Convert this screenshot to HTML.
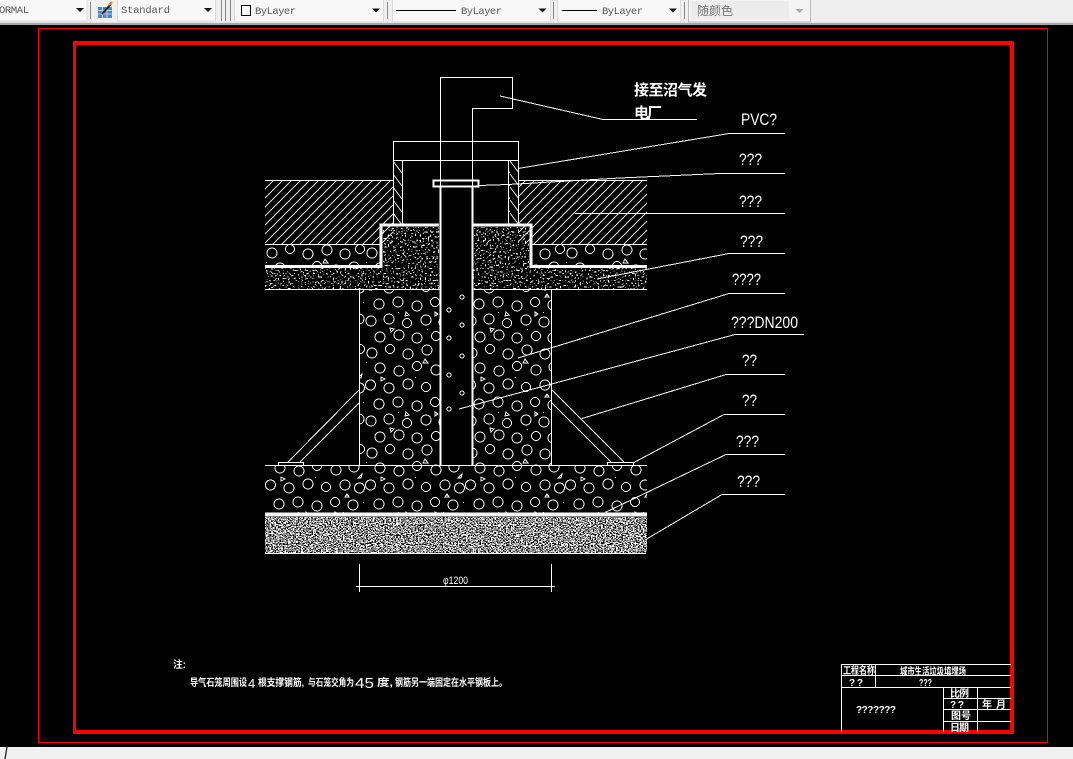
<!DOCTYPE html>
<html><head><meta charset="utf-8"><style>
html,body{margin:0;padding:0;background:#000;width:1073px;height:759px;overflow:hidden}
svg{display:block}
.t{font-family:"Liberation Mono",monospace;font-size:10.500px;fill:#555}
.l{font-family:"Liberation Sans",sans-serif;font-size:17px;fill:#fff}
.c{font-family:"Liberation Sans","WenQuanYi Zen Hei","Noto Sans CJK SC",sans-serif;fill:#fff;font-weight:bold}
.n{font-family:"Liberation Sans","WenQuanYi Zen Hei","Noto Sans CJK SC",sans-serif;fill:#fff;font-size:10px;font-weight:bold}
.combo{fill:#f8f8f8;stroke:#dcdcdc}
.sep{stroke:#888;stroke-width:1}
</style></head><body>
<svg width="1073" height="759" viewBox="0 0 1073 759" xmlns="http://www.w3.org/2000/svg">
<defs>
<pattern id="c" width="100" height="100" patternUnits="userSpaceOnUse" patternTransform="translate(265 244)">
<g fill="none" stroke="#fff" stroke-width="1" shape-rendering="crispEdges">
<circle cx="7" cy="9" r="5"/><circle cx="25" cy="5" r="4.500"/><circle cx="43" cy="10" r="5"/><circle cx="62" cy="6" r="5"/><circle cx="80" cy="10" r="5"/><circle cx="95" cy="5" r="4.500"/>
<circle cx="15" cy="24" r="5"/><circle cx="34" cy="27" r="5"/><circle cx="52" cy="22" r="4.500"/><circle cx="71" cy="26" r="5"/><circle cx="89" cy="23" r="5"/>
<circle cx="5.500" cy="41" r="5"/><circle cx="24" cy="44" r="5"/><circle cx="43" cy="40" r="5"/><circle cx="61" cy="43" r="4.500"/><circle cx="80" cy="41" r="5"/><circle cx="94.500" cy="44" r="5"/>
<circle cx="14" cy="60" r="5"/><circle cx="33" cy="58" r="5"/><circle cx="52" cy="62" r="5"/><circle cx="70" cy="58" r="4.500"/><circle cx="88" cy="61" r="5"/>
<circle cx="6" cy="77" r="5"/><circle cx="24" cy="75" r="5"/><circle cx="42" cy="79" r="4.500"/><circle cx="61" cy="76" r="5"/><circle cx="79" cy="78" r="5"/><circle cx="94" cy="75" r="5"/>
<circle cx="15" cy="93" r="5"/><circle cx="34" cy="91" r="5"/><circle cx="52" cy="94" r="5"/><circle cx="71" cy="92" r="4.500"/><circle cx="88" cy="94" r="5"/>
<path d="M16 33l4 2-4 2zM60 15l3 4h-5zM97 30l-1 4h-3zM41 68l3 3-4 1zM70 68l3 2-3 2zM25 84l4 1-3 3zM82 50l2 3h-4z"/>
</g>
<g fill="#fff"><rect x="1" y="18" width="1" height="1"/><rect x="50" y="33" width="1" height="1"/><rect x="33" y="68" width="1" height="1"/><rect x="78" y="68" width="1" height="1"/><rect x="98" y="58" width="1" height="1"/><rect x="62" y="85" width="1" height="1"/></g>
</pattern>
<pattern id="h1" width="9" height="9" patternUnits="userSpaceOnUse" patternTransform="translate(265 180)">
<path d="M-1 10L10 -1M-1 1L1 -1M8 10L10 8" stroke="#fff" stroke-width=".9" fill="none"/>
</pattern>
<pattern id="h2" width="9" height="13" patternUnits="userSpaceOnUse" patternTransform="translate(393 161)">
<path d="M0 0L9 12" stroke="#fff" stroke-width=".9" fill="none"/>
</pattern>
<filter id="g1" x="0" y="0" width="100%" height="100%" color-interpolation-filters="sRGB">
<feTurbulence type="fractalNoise" baseFrequency="0.6" numOctaves="1" seed="5"/>
<feColorMatrix values="0 0 0 0 1 0 0 0 0 1 0 0 0 0 1 80 0 0 0 -50"/>
</filter>
<filter id="g2" x="0" y="0" width="100%" height="100%" color-interpolation-filters="sRGB">
<feTurbulence type="fractalNoise" baseFrequency="0.6 1.1" numOctaves="1" seed="9"/>
<feColorMatrix values="0 0 0 0 1 0 0 0 0 1 0 0 0 0 1 80 0 0 0 -38.500"/>
</filter>
</defs>

<!-- backgrounds -->
<rect width="1073" height="759" fill="#000"/>
<rect width="1073" height="22" fill="#efefef"/>
<rect y="22" width="1073" height="1" fill="#e0e0e0"/>
<rect y="23" width="1073" height="2" fill="#a8a8a8"/>
<rect y="747" width="1073" height="12" fill="#f0f0f0"/>
<path d="M7 747L5 759" stroke="#222" stroke-width="1.300"/>

<!-- toolbar -->
<g shape-rendering="crispEdges">
<rect x="-3" y="-2" width="90" height="23" class="combo"/>
<rect x="117.500" y="-2" width="98" height="23" class="combo"/>
<rect x="234.500" y="-2" width="149" height="24" class="combo"/>
<rect x="392.500" y="-2" width="158" height="24" class="combo"/>
<rect x="557.500" y="-2" width="123" height="24" class="combo"/>
<rect x="688.500" y="-2" width="122" height="24" fill="#f4f4f4" stroke="#bbb"/>
<rect x="691" y="1" width="98" height="18" fill="#ececec"/>
<path class="sep" d="M90.500 2V19M221.500 0V21M225.500 0V21M230.500 0V21M387.500 2V19M553.500 2V19M684.500 2V19"/>
<rect x="241.500" y="5.500" width="9" height="10" fill="#fff" stroke="#000"/>
<path d="M396 10.500H456M562 10.500H597" stroke="#000"/>
</g>
<g fill="#111">
<path d="M76 8h8l-4 4zM204 8h8l-4 4zM372 8.500h8l-4 4zM538.500 8.500h8l-4 4zM669 8.500h8l-4 4z"/>
<path d="M795.500 9h8l-4 4z" fill="#aaa"/>
</g>
<text class="t" x="-1" y="13" textLength="30">ORMAL</text>
<text class="t" x="121" y="13" textLength="49">Standard</text>
<text class="t" x="255" y="14" textLength="41">ByLayer</text>
<text class="t" x="461" y="14" textLength="41">ByLayer</text>
<text class="t" x="602" y="14" textLength="41">ByLayer</text>
<text x="697" y="15" font-size="12" fill="#777" font-family="'WenQuanYi Zen Hei','Noto Sans CJK SC',sans-serif">随颜色</text>
<!-- icon -->
<rect x="98" y="7" width="14" height="11" fill="#4f86c6"/>
<path d="M98 10.500H112M98 14H112M102.500 7V18M107 7V18" stroke="#cfe0f2" stroke-width=".8"/>
<path d="M102 14L111 4" stroke="#222" stroke-width="2"/>
<path d="M109 5L112 2" stroke="#d88a2a" stroke-width="2"/>

<!-- red frames -->
<path fill="#f00" fill-rule="evenodd" d="M38 28H1048V743H38ZM39 29V742H1047V29Z"/>
<path fill="#f00" fill-rule="evenodd" d="M73 41H1014V734H73ZM76 45V730H1010V45Z"/>

<!-- textures -->
<rect x="265" y="180" width="128" height="64" fill="url(#h1)"/>
<rect x="518" y="180" width="129" height="64" fill="url(#h1)"/>
<rect x="393" y="161" width="9" height="63" fill="url(#h2)"/>
<rect x="509" y="161" width="9" height="63" fill="url(#h2)"/>
<rect x="265" y="244" width="115" height="22" fill="url(#c)"/>
<rect x="532" y="244" width="115" height="22" fill="url(#c)"/>
<rect x="360" y="289" width="80" height="176" fill="url(#c)"/>
<rect x="473" y="289" width="79" height="176" fill="url(#c)"/>
<rect x="265" y="465" width="382" height="48" fill="url(#c)"/>
<rect x="265" y="268" width="175" height="21" fill="#fff" filter="url(#g1)"/>
<rect x="473" y="268" width="174" height="21" fill="#fff" filter="url(#g1)"/>
<rect x="383" y="227" width="56" height="41" fill="#fff" filter="url(#g1)"/>
<rect x="474" y="227" width="55" height="41" fill="#fff" filter="url(#g1)"/>
<rect x="265" y="517" width="382" height="36" fill="#fff" filter="url(#g2)"/>

<!-- structure -->
<g fill="none" stroke="#fff" stroke-width="1" shape-rendering="crispEdges">
<path d="M440.500 187V77.500H512.500V108.500H472.500V187"/>
<path d="M393.500 224V141.500H518.500V224M393.500 160.500H518.500M402.500 160.500V224M508.500 160.500V224"/>
<path d="M265 180.500H393M518 180.500H647M265 244.500H380M531 244.500H647M265 289.500H440M473 289.500H647M265 465.500H647M265 553.500H646"/>
<path d="M359.500 289V465M551.500 289V465"/>
<rect x="433.500" y="180.500" width="45" height="6" stroke-width="2"/>
<path d="M265 514.500H647" stroke-width="4"/>
<path d="M265 266.500H381V225H439M473 225H531V266.500H647" stroke-width="3"/>
<path d="M440.500 187V465M472.500 187V465" stroke-width="2"/>
<path d="M359.500 564V592M551.500 564V592M356 586.500H555"/>
<rect x="278.500" y="462.500" width="25" height="3"/>
<rect x="607.500" y="462.500" width="26" height="3"/>
</g>
<g fill="none" stroke="#fff" stroke-width="1" shape-rendering="crispEdges">
<path d="M359 390L288 462M359 403L300 462M552 390L624 462M552 403L611 462"/>
<path d="M500 96L603 119.500H697"/>
<path d="M518 168.500L729 133.500H785"/>
<path d="M479 185.500L508 184.500L620 178L720 173.500H785"/>
<path d="M575 213.500H785"/>
<path d="M597 279L729 253.500H785"/>
<path d="M518 358L729 293.500H785"/>
<path d="M459 409L735 334.500H804"/>
<path d="M582 418.500L726 374.500H785"/>
<path d="M633 463L724 414.500H785"/>
<path d="M606 512L726 454.500H785"/>
<path d="M645 540L722 494.500H785"/>
<circle cx="449" cy="310" r="2"/><circle cx="462" cy="297" r="2"/><circle cx="462" cy="325" r="2"/><circle cx="449" cy="338" r="2"/><circle cx="462" cy="356" r="2"/><circle cx="449" cy="375" r="2"/><circle cx="462" cy="393" r="2"/><circle cx="449" cy="409" r="2"/>
</g>

<!-- labels -->
<text class="c" x="634" y="95" font-size="15" textLength="73">接至沼气发</text>
<text class="c" x="634" y="118" font-size="15" textLength="28">电厂</text>
<text class="l" x="741" y="125" textLength="36" lengthAdjust="spacingAndGlyphs">PVC?</text>
<text class="l" x="739" y="165" textLength="23" lengthAdjust="spacingAndGlyphs">???</text>
<text class="l" x="739" y="207" textLength="23" lengthAdjust="spacingAndGlyphs">???</text>
<text class="l" x="740" y="247" textLength="23" lengthAdjust="spacingAndGlyphs">???</text>
<text class="l" x="732" y="285" textLength="29" lengthAdjust="spacingAndGlyphs">????</text>
<text class="l" x="731" y="328" textLength="67" lengthAdjust="spacingAndGlyphs">???DN200</text>
<text class="l" x="742" y="366" textLength="15" lengthAdjust="spacingAndGlyphs">??</text>
<text class="l" x="742" y="406" textLength="15" lengthAdjust="spacingAndGlyphs">??</text>
<text class="l" x="736" y="447" textLength="23" lengthAdjust="spacingAndGlyphs">???</text>
<text class="l" x="737" y="487" textLength="23" lengthAdjust="spacingAndGlyphs">???</text>
<text x="443" y="584" font-family="Liberation Sans,sans-serif" font-size="11" fill="#fff" textLength="25" lengthAdjust="spacingAndGlyphs">φ1200</text>

<!-- notes -->
<text class="n" x="173" y="668" textLength="13" lengthAdjust="spacingAndGlyphs">注:</text>
<text class="n" x="190" y="686" textLength="57" lengthAdjust="spacingAndGlyphs">导气石笼周围设</text>
<text x="248" y="688" font-family="Liberation Sans,sans-serif" font-size="13" fill="#fff">4</text>
<text class="n" x="258" y="686" textLength="46" lengthAdjust="spacingAndGlyphs">根支撑钢筋,</text>
<text class="n" x="308" y="686" textLength="46" lengthAdjust="spacingAndGlyphs">与石笼交角为</text>
<text x="355" y="688" font-family="Liberation Sans,sans-serif" font-size="15" fill="#fff" textLength="19" lengthAdjust="spacingAndGlyphs">45</text>
<text class="n" x="377" y="686" textLength="16" lengthAdjust="spacingAndGlyphs">度,</text>
<text class="n" x="395" y="686" textLength="112" lengthAdjust="spacingAndGlyphs">钢筋另一端固定在水平钢板上。</text>

<!-- title block -->
<g fill="none" stroke="#fff" shape-rendering="crispEdges">
<path d="M841.500 732V664.500H1011M841.500 675.500H1011M841.500 687.500H1011M875.500 664V687M943.500 687V732M977.500 687V732M943.500 698.500H1011M943.500 709.500H1011M943.500 721.500H1011"/>
</g>
<text class="n" x="843" y="674" textLength="32" lengthAdjust="spacingAndGlyphs">工程名称</text>
<text class="n" x="900" y="675" textLength="66" lengthAdjust="spacingAndGlyphs">城市生活垃圾填埋场</text>
<text class="n" x="849" y="686" font-weight="normal" textLength="14">? ?</text>
<text class="n" x="919" y="686" font-weight="normal" textLength="13" lengthAdjust="spacingAndGlyphs">???</text>
<text class="n" x="856" y="713" font-weight="normal" textLength="40">???????</text>
<text class="n" x="950" y="697" textLength="19">比 例</text>
<text class="n" x="950" y="708" font-weight="normal" textLength="14">? ?</text>
<text class="n" x="982" y="708" textLength="24">年　月</text>
<text class="n" x="951" y="719" textLength="20">图 号</text>
<text class="n" x="950" y="731" textLength="19">日 期</text>
</svg>
</body></html>
